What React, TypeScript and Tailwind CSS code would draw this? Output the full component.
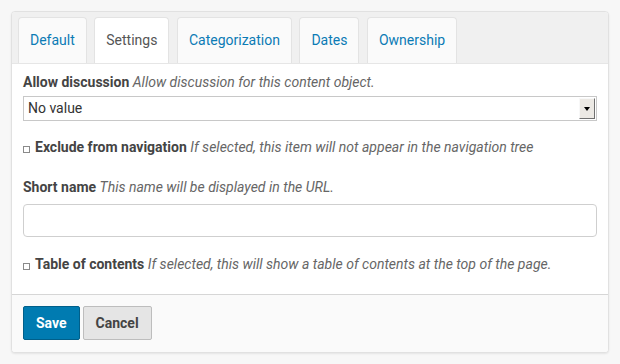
import React from "react";

const tabs = ["Default", "Settings", "Categorization", "Dates", "Ownership"];

const Check = () => (
  <span className="inline-block w-[7px] h-[7px] border border-[#8a8a8a] bg-white mr-[5px] translate-y-[1px]" />
);

export default function App() {
  return (
    <div
      className="w-[620px] h-[364px] bg-[#f7f7f7] pt-[11px] pl-[11px]"
      style={{ fontFamily: "Roboto, 'Liberation Sans', sans-serif" }}
    >
      <div className="w-[598px] h-[342px] border border-[#e1e1e1] rounded-[4px] shadow-[0_1px_2px_rgba(0,0,0,0.08)] overflow-hidden flex flex-col bg-white">
        {/* tab bar */}
        <div className="bg-[#f0f0f0] pt-[5px] pl-[6px] flex gap-[7.5px] border-b border-[#e6e6e6]">
          {tabs.map((t) => (
            <div
              key={t}
              className={`h-[46px] px-[11px] flex items-center text-[14px] rounded-t-[4px] border border-b-0 border-[#e3e3e3] ${
                t === "Settings" ? "bg-white text-[#555]" : "bg-[#fafafa] text-[#0b7bb5]"
              }`}
            >
              {t}
            </div>
          ))}
        </div>

        {/* fields */}
        <div className="flex-1 bg-white px-[11px] pt-[8px] text-[14px] text-[#444]">
          <div className="leading-[20px]">
            <span className="font-bold">Allow discussion</span>{" "}
            <span className="italic text-[#666]">Allow discussion for this content object.</span>
          </div>
          <div className="mt-[4px] h-[25px] border border-[#c8c8c8] flex items-center justify-between pl-[4px] pr-[1px] text-[#333]">
            <span>No value</span>
            <div className="w-[16px] h-[21px] bg-[#ece9e4] border border-[#f8f8f8] border-r-[#707070] border-b-[#707070] flex items-center justify-center">
              <div className="w-0 h-0 border-l-[3.5px] border-r-[3.5px] border-t-[4px] border-l-transparent border-r-transparent border-t-black" />
            </div>
          </div>

          <div className="mt-[16px] leading-[20px]">
            <Check />
            <span className="font-bold">Exclude from navigation</span>{" "}
            <span className="italic text-[#666]">If selected, this item will not appear in the navigation tree</span>
          </div>

          <div className="mt-[20px] leading-[20px]">
            <span className="font-bold">Short name</span>{" "}
            <span className="italic text-[#666]">This name will be displayed in the URL.</span>
          </div>
          <div className="mt-[7px] h-[33px] border border-[#cfcfcf] rounded-[4px] bg-white" />

          <div className="mt-[17px] leading-[20px]">
            <Check />
            <span className="font-bold">Table of contents</span>{" "}
            <span className="italic text-[#666]">If selected, this will show a table of contents at the top of the page.</span>
          </div>
        </div>

        {/* footer */}
        <div className="h-[58px] border-t border-[#d6d6d6] bg-[#fafafa] px-[11px] pt-[11px] flex gap-[3px] items-start">
          <button className="h-[34px] px-[12px] bg-[#007bb1] border border-[#005f8a] rounded-[2px] text-white font-bold text-[14px]">
            Save
          </button>
          <button className="h-[34px] px-[12px] bg-[#e5e5e5] border border-[#bdbdbd] rounded-[2px] text-[#444] font-bold text-[14px]">
            Cancel
          </button>
        </div>
      </div>
    </div>
  );
}
